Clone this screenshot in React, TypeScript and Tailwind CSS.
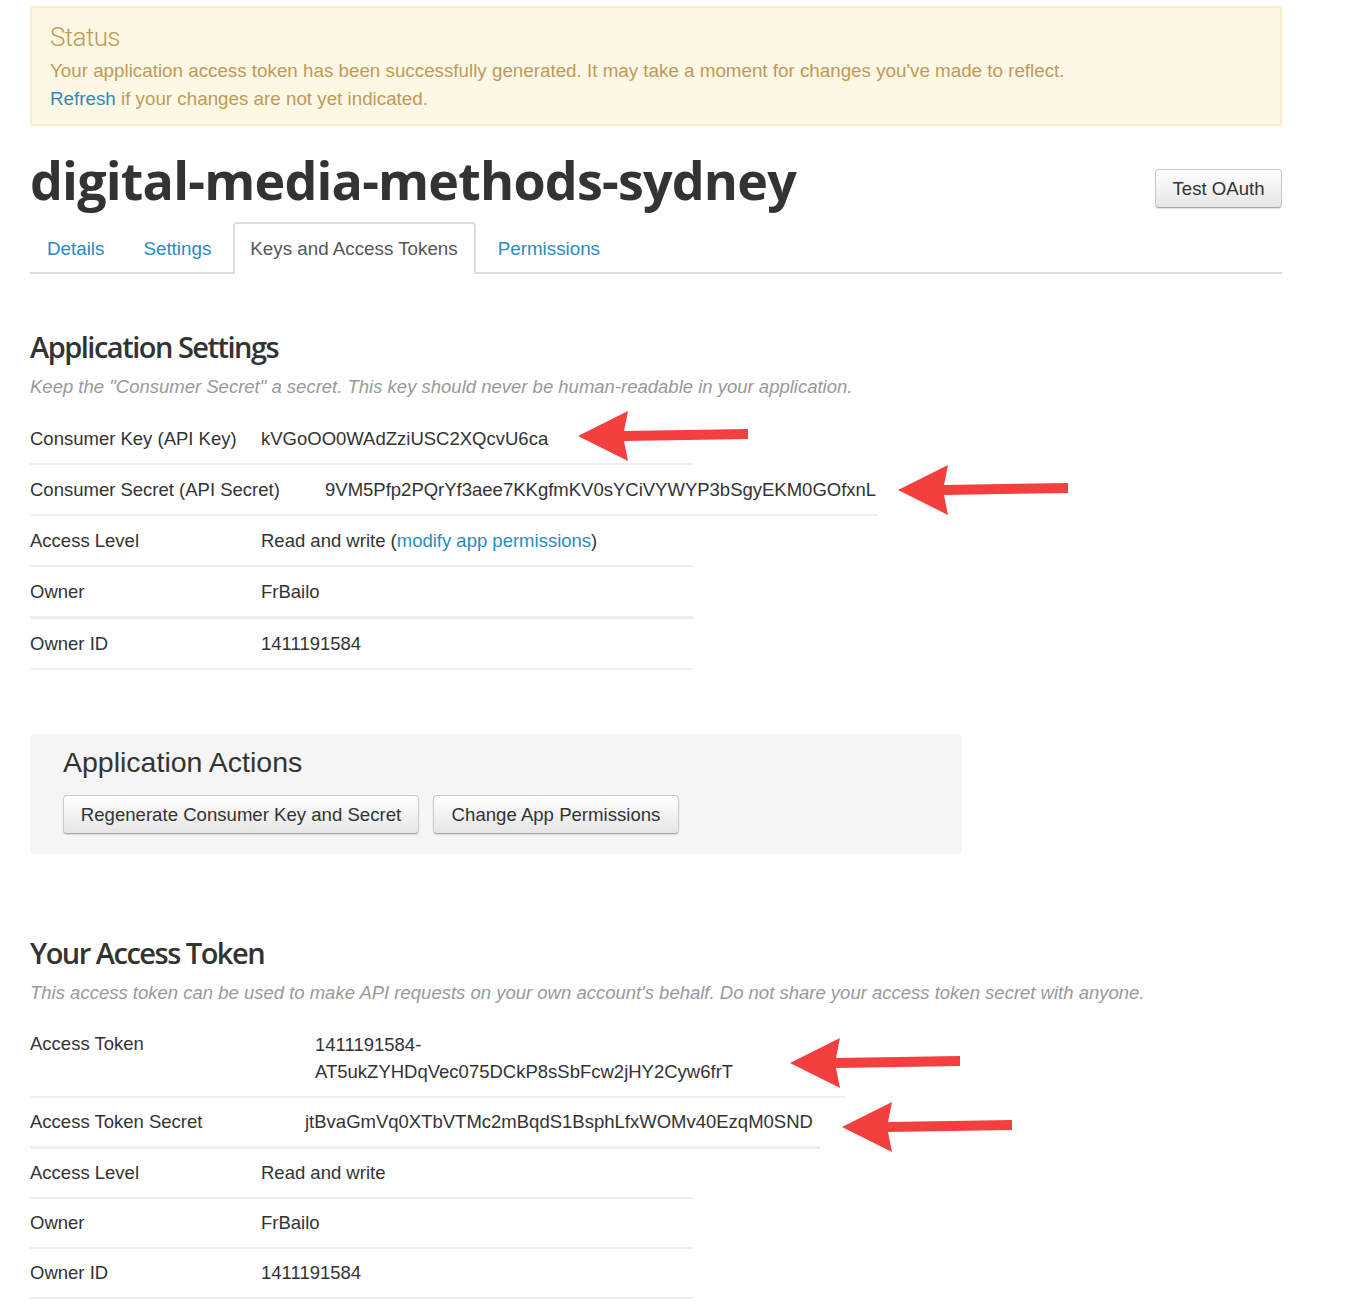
import React from "react";

const body = "font-['Liberation_Sans',Arial,sans-serif]";
const head = "font-['Open_Sans',sans-serif]";

type Row = { label: string; value: React.ReactNode; valuePad?: string; wide?: string; thick?: boolean };

const Arrow = ({ className }: { className: string }) => (
	<svg className={`pointer-events-none absolute ${className}`} width="172" height="52" viewBox="0 0 172 52">
		<polygon points="0,26 50,1 46,21 170,19 170,29 46,31 50,51" fill="#f43f3f" />
	</svg>
);

const InfoTable = ({ rows, pad = "pt-[12px] pb-[11px]" }: { rows: Row[]; pad?: string }) => (
	<div className="flex flex-col">
		{rows.map((r, i) => (
			<div
				key={i}
				className={`flex items-start ${pad} leading-[26px] border-b-2 ${r.thick ? "border-b-[3px]" : ""} border-[#eee] ${r.wide ?? "w-[663px]"}`}
			>
				<div className="w-[231px] shrink-0 whitespace-nowrap">{r.label}</div>
				<div className={`${r.valuePad ?? ""} whitespace-nowrap`}>{r.value}</div>
			</div>
		))}
	</div>
);

const Button = ({ children, className = "" }: { children: React.ReactNode; className?: string }) => (
	<button
		className={`rounded-[4px] border border-[#c8c8c8] border-b-[#aaa] bg-gradient-to-b from-white to-[#e6e6e6] shadow-[0_1px_1px_rgba(0,0,0,0.12)] text-[18.6px] text-[#333] ${className}`}
	>
		{children}
	</button>
);

export default function App() {
	return (
		<div className={`relative min-h-[1306px] bg-white px-[30px] pt-[6px] text-[18.5px] text-[#333] ${body}`}>
			<div className="w-[1252px] rounded-[4px] border-2 border-[#faebcc] bg-[#fcf8e3] px-[18px] pt-[12px] pb-[11px] text-[#c0995a]">
				<h4 className="text-[26px] leading-[34px] tracking-[-0.6px] text-[#c0995a] font-['Roboto',sans-serif] font-light">Status</h4>
				<p className="mt-[3px] text-[18.8px] leading-[28px]">
					Your application access token has been successfully generated. It may take a moment for changes you've made to reflect.
				</p>
				<p className="text-[18.8px] leading-[28px]">
					<span className="text-[#2a8bbf]">Refresh</span> if your changes are not yet indicated.
				</p>
			</div>

			<div className="w-[1252px] flex items-start justify-between mt-[22px]">
				<h1 className={`${head} font-bold text-[52px] leading-[64px] tracking-[-0.8px] text-[#333]`}>digital-media-methods-sydney</h1>
				<Button className="mt-[21px] h-[39px] w-[127px]">Test OAuth</Button>
			</div>

			<div className="mt-[10px] w-[1252px] flex items-end border-b-2 border-[#ddd] text-[18.8px] leading-[25px]">
				<div className="pl-[17px] pr-[17px] pb-[11px] text-[#2a8bbf]">Details</div>
				<div className="pl-[22px] pr-[22px] pb-[11px] text-[#2a8bbf]">Settings</div>
				<div className="-mb-[2px] rounded-t-[4px] border-2 border-b-0 border-[#ddd] bg-white pl-[15px] pr-[16px] pt-[12px] pb-[13px] text-[#555]">
					Keys and Access Tokens
				</div>
				<div className="pl-[22px] pb-[11px] text-[#2a8bbf]">Permissions</div>
			</div>

			<h2 className={`mt-[55px] ${head} font-semibold text-[29px] leading-[36px] tracking-[-1.5px] text-[#333]`}>Application Settings</h2>
			<p className="mt-[9px] leading-[26px] italic text-[#999]">
				Keep the "Consumer Secret" a secret. This key should never be human-readable in your application.
			</p>

			<div className="mt-[14px]">
				<InfoTable
					rows={[
						{ label: "Consumer Key (API Key)", value: "kVGoOO0WAdZziUSC2XQcvU6ca" },
						{
							label: "Consumer Secret (API Secret)",
							value: "9VM5Pfp2PQrYf3aee7KKgfmKV0sYCiVYWYP3bSgyEKM0GOfxnL",
							valuePad: "pl-[64px]",
							wide: "w-[848px]",
						},
						{
							label: "Access Level",
							value: (
								<>
									Read and write (<span className="text-[#2a8bbf]">modify app permissions</span>)
								</>
							),
						},
						{ label: "Owner", value: "FrBailo", thick: true },
						{ label: "Owner ID", value: "1411191584" },
					]}
				/>
			</div>

			<div className="mt-[64px] w-[932px] rounded-[4px] bg-[#f5f5f5] px-[33px] pt-[11px] pb-[20px]">
				<h3 className="text-[28.5px] leading-[34px] text-[#333]">Application Actions</h3>
				<div className="mt-[16px] flex gap-[14px]">
					<Button className="h-[39px] w-[356px]">Regenerate Consumer Key and Secret</Button>
					<Button className="h-[39px] w-[246px]">Change App Permissions</Button>
				</div>
			</div>

			<h2 className={`mt-[81px] ${head} font-semibold text-[29px] leading-[36px] tracking-[-1.5px] text-[#333]`}>Your Access Token</h2>
			<p className="mt-[9px] leading-[26px] italic text-[#999]">
				This access token can be used to make API requests on your own account's behalf. Do not share your access token secret with anyone.
			</p>

			<div className="mt-[14px]">
				<InfoTable
					pad="pt-[11px] pb-[11px]"
					rows={[
						{
							label: "Access Token",
							value: (
								<div className="leading-[27px]">
									1411191584-
									<br />
									AT5ukZYHDqVec075DCkP8sSbFcw2jHY2Cyw6frT
								</div>
							),
							valuePad: "pl-[54px]",
							wide: "w-[815px]",
						},
						{
							label: "Access Token Secret",
							value: "jtBvaGmVq0XTbVTMc2mBqdS1BsphLfxWOMv40EzqM0SND",
							valuePad: "pl-[44px]",
							wide: "w-[790px]",
							thick: true,
						},
						{ label: "Access Level", value: "Read and write" },
						{ label: "Owner", value: "FrBailo" },
						{ label: "Owner ID", value: "1411191584" },
					]}
				/>
			</div>

			<Arrow className="left-[578px] top-[410px]" />
			<Arrow className="left-[898px] top-[464px]" />
			<Arrow className="left-[790px] top-[1037px]" />
			<Arrow className="left-[842px] top-[1101px]" />
		</div>
	);
}
